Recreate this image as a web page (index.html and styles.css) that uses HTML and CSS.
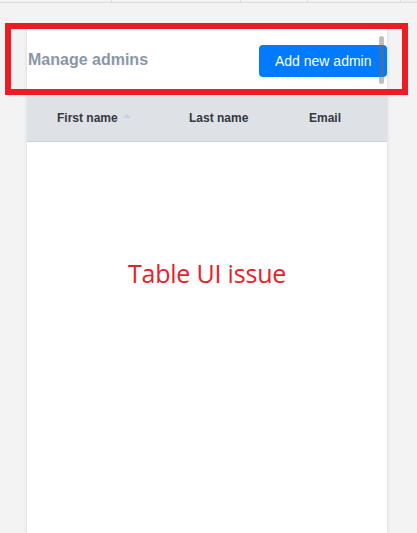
FILE: index.html
```html
<!DOCTYPE html>
<html>
<head>
<meta charset="utf-8">
<link rel="stylesheet" href="styles.css">
</head>
<body>
<div class="topstrip">
  <div class="seg s1"></div>
  <div class="seg s2"></div>
  <div class="seg s3"></div>
  <div class="seg s4"></div>
  <div class="seg s5"></div>
</div>
<div class="card">
  <div class="card-header">
    <h2 class="title">Manage admins</h2>
    <button class="btn">Add new admin</button>
    <div class="thumb"></div>
  </div>
  <div class="thead">
    <div class="th c1">First name <span class="sort"></span></div>
    <div class="th c2">Last name</div>
    <div class="th c3">Email</div>
  </div>
  <div class="tbody">
    <div class="issue">Table UI issue</div>
  </div>
</div>
<div class="highlight"></div>
</body>
</html>
```
FILE: styles.css
```css
html, body {
  margin: 0;
  padding: 0;
  height: 100%;
  overflow: hidden;
}
body {
  background: #f3f3f3;
  font-family: "Liberation Sans", Arial, sans-serif;
  position: relative;
  display: flex;
  flex-direction: column;
}
.topstrip {
  display: flex;
  height: 2px;
  flex: none;
  border-bottom: 1px solid #dcdcdc;
}
.seg { height: 100%; border-right: 1px solid #dcdcdc; }
.s1 { width: 111px; }
.s2 { width: 128px; }
.s3 { width: 66px; }
.s4 { width: 92px; }
.s5 { flex: 1; border-right: none; background: #efefef; }
.card {
  flex: 1;
  margin: 26px 0 0 27px;
  width: 360px;
  background: #fff;
  box-shadow: 0 0 4px rgba(0,0,0,0.12);
}
.card-header {
  position: relative;
  height: 66px;
  display: flex;
  align-items: center;
  justify-content: space-between;
  padding-left: 1px;
}
.title {
  margin: 0 0 4px 0;
  font-size: 16px;
  font-weight: bold;
  color: #8a96a8;
}
.btn {
  margin-bottom: 2px;
  height: 32px;
  width: 128px;
  border: none;
  border-radius: 4px;
  background: #007bff;
  color: #fff;
  font-family: "Liberation Sans", Arial, sans-serif;
  font-size: 14px;
  text-align: left;
  padding: 0 0 0 16px;
}
.thumb {
  position: absolute;
  left: 352px;
  top: 7px;
  width: 5px;
  height: 48px;
  border-radius: 3px;
  background: rgba(110,110,110,0.45);
}
.thead {
  height: 46px;
  background: #dee2e7;
  border-bottom: 1px solid #c9d1df;
  display: flex;
  align-items: center;
  font-size: 12px;
  font-weight: bold;
  color: #35383d;
}
.th { display: flex; align-items: center; }
.c1 { margin-left: 30px; width: 132px; }
.c2 { width: 120px; }
.sort {
  display: inline-block;
  width: 0; height: 0;
  margin-left: 5px;
  margin-top: -5px;
  border-left: 4px solid transparent;
  border-right: 4px solid transparent;
  border-bottom: 4px solid #c3cfe4;
}
.tbody {
  padding-top: 114px;
  text-align: center;
}
.issue {
  font-family: "Open Sans", "Noto Sans", sans-serif;
  font-size: 25px;
  color: #e8202a;
  letter-spacing: -0.2px;
}
.highlight {
  position: absolute;
  left: 5px;
  top: 23px;
  width: 391px;
  height: 60px;
  border: 6px solid #ed1c24;
}
```
